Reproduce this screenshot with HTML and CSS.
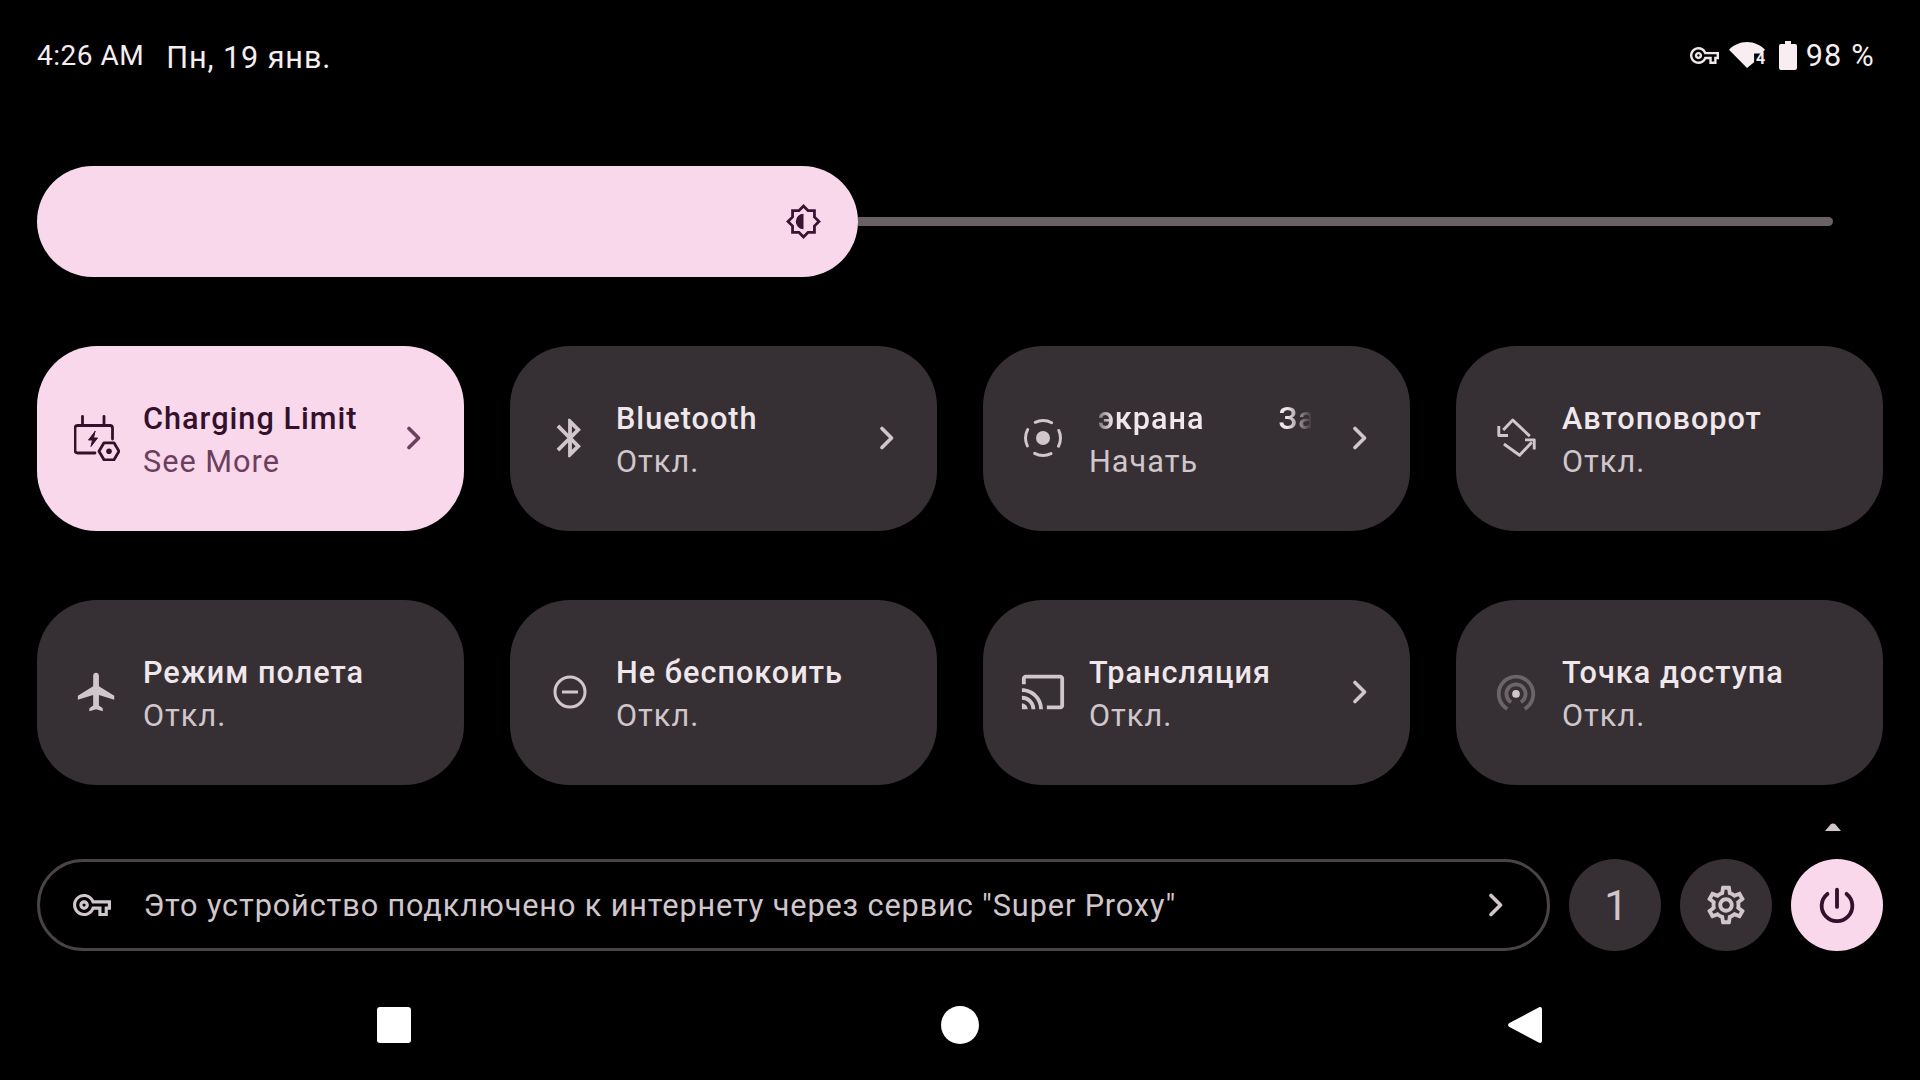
FILE: index.html
```html
<!DOCTYPE html>
<html lang="ru">
<head>
<meta charset="utf-8">
<title>Быстрые настройки</title>
<link rel="stylesheet" href="styles.css">
</head>
<body>
<svg class="defs" width="0" height="0" aria-hidden="true">
  <defs>
    <symbol id="chev" viewBox="0 0 16 24"><path d="M3 2.500 12.500 12 3 21.500" fill="none" stroke="currentColor" stroke-width="3.600" stroke-linecap="round" stroke-linejoin="round"/></symbol>
    <symbol id="key" viewBox="0 0 24 24"><path fill="currentColor" d="M22 19h-6v-4h-2.680c-1.140 2.420-3.620 4-6.320 4-3.860 0-7-3.140-7-7s3.140-7 7-7c2.700 0 5.170 1.580 6.320 4H24v6h-2v4zm-4-2h2v-4h2v-2H11.940l-.23-.67C11.010 8.340 9.110 7 7 7c-2.760 0-5 2.240-5 5s2.240 5 5 5c2.110 0 4.010-1.340 4.710-3.330l.23-.67H18v4zM7 15c-1.650 0-3-1.350-3-3s1.350-3 3-3 3 1.350 3 3-1.350 3-3 3zm0-4c-.55 0-1 .45-1 1s.45 1 1 1 1-.45 1-1-.45-1-1-1z"/></symbol>
  </defs>
</svg>
<main class="page">
  <header class="status">
    <span class="time">4:26 AM</span>
    <span class="date">Пн, 19 янв.</span>
    <div class="status-right">
      <svg class="st-key"><use href="#key"/></svg>
      <div class="wifi">
        <svg class="wifi-fan" viewBox="0 0 33 25" preserveAspectRatio="none"><path fill="currentColor" d="M0 7.500C4 3 10 0 16.500 0S29 3 33 7.500L30 11h-7v8.500L16.500 25z"/></svg>
        <span class="wifi-num">4</span>
      </div>
      <svg class="battery" viewBox="0 0 18 29"><path fill="currentColor" d="M6 0h6v3h4c1.100 0 2 .9 2 2v22c0 1.100-.9 2-2 2H2c-1.100 0-2-.9-2-2V5c0-1.100.9-2 2-2h4z"/></svg>
      <span class="percent">98 %</span>
    </div>
  </header>

  <section class="slider">
    <div class="thumb">
      <svg class="bright" viewBox="0 0 24 24"><path fill="currentColor" fill-rule="evenodd" d="M20 15.310 23.310 12 20 8.690V4h-4.690L12 .69 8.690 4H4v4.690L.69 12 4 15.310V20h4.690L12 23.310 15.310 20H20zm-1.800-.74V18.200h-3.630L12 20.770 9.430 18.200H5.800v-3.630L3.230 12 5.800 9.430V5.800h3.630L12 3.230l2.570 2.570h3.630v3.630L20.770 12z"/><path fill="currentColor" d="M12 7a5 5 0 0 0 0 10z"/></svg>
    </div>
    <div class="track"></div>
  </section>

  <section class="grid">
    <article class="tile tile-on">
      <svg class="ic" viewBox="0 0 46 46" fill="none" stroke="currentColor" stroke-width="2.800" stroke-linecap="round" stroke-linejoin="round">
        <path d="M21 38H3.500a2.500 2.500 0 0 1-2.500-2.500V13a2.500 2.500 0 0 1 2.500-2.500H36A2.500 2.500 0 0 1 38.500 13v11"/>
        <path d="M8.500 1.500v9M30 1.500v9"/>
        <path fill="currentColor" stroke-width="1" d="M21 16.500 14.500 25h4l-1.500 6.500 6.500-8.500h-4l1.500-6.500z"/>
        <path stroke-width="2.800" d="M25 36.300 30 27.800h10l5 8.500-5 8.500H30z"/>
        <circle cx="35" cy="36.300" r="2.800" fill="currentColor" stroke="none"/>
      </svg>
      <div class="txt"><div class="ttl">Charging Limit</div><div class="sub">See More</div></div>
      <svg class="chev"><use href="#chev"/></svg>
    </article>

    <article class="tile">
      <svg class="ic" viewBox="0 0 24 24"><path fill="currentColor" d="M17.710 7.710 12 2h-1v7.590L6.410 5 5 6.410 10.590 12 5 17.590 6.410 19 11 14.410V22h1l5.710-5.710-4.300-4.290 4.300-4.290zM13 5.830l1.880 1.880L13 9.590V5.830zm1.880 10.460L13 18.170v-3.760l1.880 1.880z"/></svg>
      <div class="txt"><div class="ttl">Bluetooth</div><div class="sub">Откл.</div></div>
      <svg class="chev"><use href="#chev"/></svg>
    </article>

    <article class="tile">
      <svg class="ic" viewBox="0 0 46 46">
        <circle cx="23" cy="23" r="17.500" fill="none" stroke="currentColor" stroke-width="3" stroke-linecap="round" stroke-dasharray="17 10.490" stroke-dashoffset="8.500"/>
        <circle cx="23" cy="23" r="7" fill="currentColor"/>
      </svg>
      <div class="txt">
        <div class="ttl marquee"><div class="marquee-in"><span>Запись экрана</span><span>Запись экрана</span></div></div>
        <div class="sub">Начать</div>
      </div>
      <svg class="chev"><use href="#chev"/></svg>
    </article>

    <article class="tile">
      <svg class="ic" viewBox="130 228 135 135" fill="none" stroke="currentColor" stroke-width="8.500" stroke-linejoin="round">
        <path d="M160 272 188 243l50 47"/>
        <path d="M147 260v28h27"/>
        <path d="M162 313l46 33 36-38"/>
        <path d="M251 329v-28h-27"/>
      </svg>
      <div class="txt"><div class="ttl">Автоповорот</div><div class="sub">Откл.</div></div>
    </article>

    <article class="tile">
      <svg class="ic" viewBox="0 0 24 24"><path fill="currentColor" d="M21 16v-2l-8-5V3.500c0-.83-.67-1.500-1.500-1.500S10 2.670 10 3.500V9l-8 5v2l8-2.500V19l-2 1.500V22l3.500-1 3.500 1v-1.500L13 19v-5.500l8 2.500z"/></svg>
      <div class="txt"><div class="ttl">Режим полета</div><div class="sub">Откл.</div></div>
    </article>

    <article class="tile">
      <svg class="ic" viewBox="0 0 46 46" fill="none" stroke="currentColor" stroke-width="3"><circle cx="23" cy="23" r="15"/><path d="M15 23h16"/></svg>
      <div class="txt"><div class="ttl">Не беспокоить</div><div class="sub">Откл.</div></div>
    </article>

    <article class="tile">
      <svg class="ic" viewBox="0 0 24 24"><path fill="currentColor" d="M21 3H3c-1.100 0-2 .9-2 2v3h2V5h18v14h-7v2h7c1.100 0 2-.9 2-2V5c0-1.100-.9-2-2-2zM1 18v3h3c0-1.660-1.340-3-3-3zm0-4v2c2.760 0 5 2.240 5 5h2c0-3.870-3.130-7-7-7zm0-4v2c4.970 0 9 4.030 9 9h2c0-6.080-4.930-11-11-11z"/></svg>
      <div class="txt"><div class="ttl">Трансляция</div><div class="sub">Откл.</div></div>
      <svg class="chev"><use href="#chev"/></svg>
    </article>

    <article class="tile">
      <svg class="ic" viewBox="0 0 24 24"><path fill="#6b6468" d="M18 13c0-3.310-2.690-6-6-6s-6 2.690-6 6c0 2.220 1.210 4.150 3 5.190l1-1.740c-1.190-.7-2-1.970-2-3.450 0-2.210 1.790-4 4-4s4 1.790 4 4c0 1.480-.81 2.750-2 3.450l1 1.740c1.790-1.040 3-2.970 3-5.190zM12 3C6.480 3 2 7.480 2 13c0 3.700 2.010 6.920 4.990 8.650l1-1.730C5.610 18.530 4 15.960 4 13c0-4.420 3.580-8 8-8s8 3.580 8 8c0 2.960-1.610 5.530-4 6.920l1 1.730c2.990-1.730 5-4.950 5-8.650 0-5.520-4.480-10-10-10z"/><circle cx="12" cy="13" r="2" fill="currentColor"/></svg>
      <div class="txt"><div class="ttl">Точка доступа</div><div class="sub">Откл.</div></div>
    </article>
  </section>

  <div class="caret-row"><svg class="caret" viewBox="0 0 16 8"><path fill="currentColor" d="M0 8 5.500 1.500C6.800 0 9.200 0 10.500 1.500L16 8z"/></svg></div>

  <footer class="footer">
    <div class="pill">
      <svg class="pill-key"><use href="#key"/></svg>
      <span class="pill-text">Это устройство подключено к интернету через сервис "Super Proxy"</span>
      <svg class="chev"><use href="#chev"/></svg>
    </div>
    <div class="round round-num">1</div>
    <div class="round">
      <svg class="ic" viewBox="0 0 24 24"><path fill="currentColor" d="M19.430 12.980c.04-.32.07-.64.07-.98 0-.34-.03-.66-.07-.98l2.110-1.650c.19-.15.24-.42.12-.64l-2-3.460c-.09-.16-.26-.25-.44-.25-.06 0-.12.01-.17.03l-2.490 1c-.52-.4-1.080-.73-1.690-.98l-.38-2.650C14.460 2.180 14.250 2 14 2h-4c-.25 0-.46.18-.49.42l-.38 2.650c-.61.25-1.170.59-1.690.98l-2.490-1c-.06-.02-.12-.03-.18-.03-.17 0-.34.09-.43.25l-2 3.460c-.13.22-.07.49.12.64l2.110 1.650c-.04.32-.07.65-.07.98 0 .33.03.66.07.98l-2.110 1.650c-.19.15-.24.42-.12.64l2 3.460c.09.16.26.25.44.25.06 0 .12-.01.17-.03l2.490-1c.52.4 1.080.73 1.690.98l.38 2.650c.03.24.24.42.49.42h4c.25 0 .46-.18.49-.42l.38-2.650c.61-.25 1.170-.59 1.690-.98l2.490 1c.06.02.12.03.18.03.17 0 .34-.09.43-.25l2-3.460c.12-.22.07-.49-.12-.64l-2.110-1.650zm-1.980-1.710c.04.31.05.52.05.73 0 .21-.02.43-.05.73l-.14 1.130.89.7 1.080.84-.7 1.210-1.270-.51-1.040-.42-.9.68c-.43.32-.84.56-1.250.73l-1.060.43-.16 1.130-.2 1.350h-1.400l-.19-1.350-.16-1.130-1.060-.43c-.43-.18-.83-.41-1.230-.71l-.91-.7-1.060.43-1.270.51-.7-1.210 1.080-.84.89-.7-.14-1.130c-.03-.31-.05-.54-.05-.74s.02-.43.05-.73l.14-1.130-.89-.7-1.080-.84.7-1.210 1.270.51 1.040.42.9-.68c.43-.32.84-.56 1.250-.73l1.060-.43.16-1.130.2-1.350h1.390l.19 1.350.16 1.130 1.060.43c.43.18.83.41 1.230.71l.91.7 1.060-.43 1.270-.51.7 1.210-1.070.85-.89.7.14 1.130zM12 8c-2.210 0-4 1.790-4 4s1.790 4 4 4 4-1.790 4-4-1.790-4-4-4zm0 6c-1.100 0-2-.9-2-2s.9-2 2-2 2 .9 2 2-.9 2-2 2z"/></svg>
    </div>
    <div class="round round-on">
      <svg class="ic" viewBox="0 0 24 24" fill="none" stroke="currentColor" stroke-width="2" stroke-linecap="round"><path d="M12 4v9"/><path d="M7 6.200a8 8 0 1 0 10 0"/></svg>
    </div>
  </footer>

  <nav class="nav">
    <div class="nav-item"><div class="nav-square"></div></div>
    <div class="nav-item"><div class="nav-circle"></div></div>
    <div class="nav-item"><svg class="nav-back" viewBox="0 0 36 38"><path fill="#fff" d="M32.500 0.500C34.500-.6 36 .4 36 2.500v33c0 2.100-1.500 3.100-3.500 2L1.500 21c-2-1.200-2-2.800 0-4z"/></svg></div>
  </nav>
</main>
</body>
</html>
```

FILE: styles.css
```css
* { box-sizing: border-box; }
html, body { margin: 0; padding: 0; background: #000; }
body { width: 1920px; height: 1080px; overflow: hidden; font-family: Roboto, "Noto Sans", sans-serif; }
.defs { display: block; height: 0; }
.page { width: 1920px; height: 1080px; padding: 0 37px; display: flex; flex-direction: column; }

.status { height: 166px; display: flex; align-items: flex-start; padding-top: 38px; color: #f5edf0; }
.time { font-size: 28px; line-height: 36px; letter-spacing: .5px; }
.date { font-size: 30.67px; line-height: 40px; margin-left: 22px; letter-spacing: .89px; }
.status-right { margin-left: auto; margin-right: 8px; margin-top: 1px; display: flex; align-items: center; height: 32px; color: #f8eef2; }
.st-key { width: 29px; height: 29px; margin-right: 10px; color: #eee6ea; }
.wifi { position: relative; width: 36px; height: 26px; margin-right: 14px; }
.wifi-fan { display: block; width: 36px; height: 26px; }
.wifi-num { position: absolute; right: 0; bottom: 1px; font-size: 16px; line-height: 16px; font-weight: 700; }
.battery { width: 18px; height: 29px; margin-right: 8.5px; }
.percent { font-size: 30.67px; line-height: 32px; letter-spacing: 1.2px; padding-top: 2px; }

.slider { width: 1796px; height: 111px; display: flex; align-items: center; }
.thumb { width: 821px; height: 111px; border-radius: 56px; background: #f8d8ea; display: flex; align-items: center; justify-content: flex-end; padding-right: 36px; color: #3b1333; flex: none; }
.bright { width: 37px; height: 37px; display: block; }
.track { flex: 1; height: 9px; background: #6a6165; border-radius: 0 5px 5px 0; }

.grid { display: grid; grid-template-columns: repeat(4, 1fr); gap: 69px 46px; margin-top: 69px; }
.tile { height: 185px; border-radius: 60px; background: #362f33; color: #d0c6cc; display: flex; align-items: center; padding: 0 42px 0 37px; }
.tile-on { background: #f8d8ea; color: #6c3f5f; }
.tile-on .ic { color: #33112c; }
.tile-on .ttl { color: #33112c; }
.tile-on .sub { color: #6c3f5f; }
.ic { width: 46px; height: 46px; flex: none; display: block; }
.tile .ic, .tile .chev { margin-bottom: 2px; }
.txt { flex: 1; min-width: 0; margin-left: 23px; padding-top: 3px; }
.ttl { font-size: 30.67px; line-height: 44px; font-weight: 500; color: #efe7eb; white-space: nowrap; letter-spacing: 1px; }
.sub { font-size: 30.67px; line-height: 42px; color: #d0c6cc; white-space: nowrap; letter-spacing: 1px; }
.chev { width: 16px; height: 24px; flex: none; display: block; margin-left: 14px; }

.marquee { width: 222px; overflow: hidden; -webkit-mask-image: linear-gradient(to right, transparent 0, #000 24px, #000 198px, transparent 224px); mask-image: linear-gradient(to right, transparent 0, #000 24px, #000 198px, transparent 224px); }
.marquee-in { display: flex; gap: 74px; margin-left: -109px; }

.caret-row { display: flex; justify-content: flex-end; padding-right: 42px; margin-top: 38px; height: 8px; color: #d0c6cc; }
.caret { width: 16px; height: 8px; display: block; }

.footer { display: flex; gap: 19px; margin-top: 28px; height: 92px; flex: none; }
.pill { flex: 1; border: 3px solid #4a4347; border-radius: 46px; display: flex; align-items: center; padding: 0 43.5px 0 33px; color: #d0c6cc; }
.pill-key { width: 38px; height: 38px; flex: none; }
.pill-text { flex: 1; margin-left: 32.5px; font-size: 30.67px; line-height: 40px; padding-top: 2px; white-space: nowrap; letter-spacing: .88px; }
.round { width: 92px; height: 92px; border-radius: 50%; background: #362f33; color: #d0c6cc; display: flex; align-items: center; justify-content: center; flex: none; }
.round-num { font-size: 42px; padding-left: 2px; }
.round-on { background: #f8d8ea; color: #33112c; }

.nav { flex: 1; display: flex; justify-content: center; align-items: center; padding-top: 18px; }
.nav-item { width: 566px; display: flex; justify-content: center; align-items: center; }
.nav-square { width: 34px; height: 36px; border-radius: 3px; background: #fff; }
.nav-circle { width: 38px; height: 38px; border-radius: 50%; background: #fff; }
.nav-back { width: 34px; height: 38px; display: block; margin-right: 2px; }
```
